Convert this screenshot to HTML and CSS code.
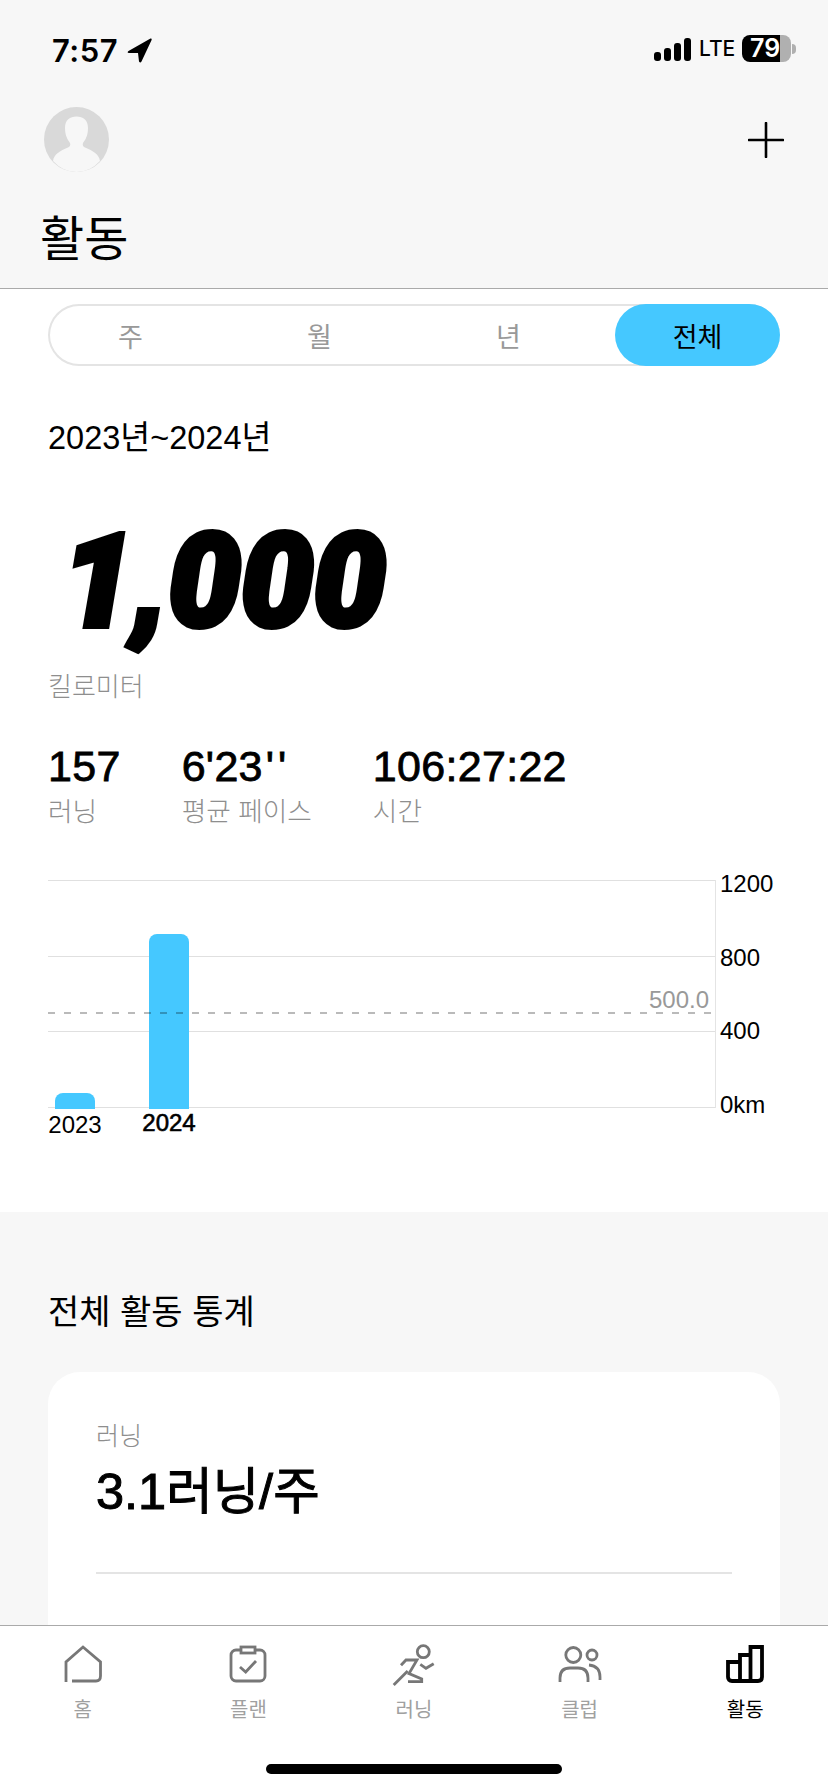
FILE: index.html
```html
<!DOCTYPE html>
<html lang="ko">
<head>
  <meta charset="UTF-8" />
  <meta name="viewport" content="width=device-width, initial-scale=1.0"/>
  <title>활동</title>
  <link rel="stylesheet" href="styles.css">
</head>
<body>
  <div class="app">
    <header class="top">
      <div class="status">
        <div class="status-left">
          <span class="clock">7:57</span>
          <svg class="arrow" width="25" height="25" viewBox="0 0 25 25"><path d="M23.5 .5 L1.5 13 Q-.5 14.8 2 15 L11 15 L12 23.5 Q13.3 25.5 14.5 23.5 L24.6 2 Q25 0 23.5 .5Z" fill="#000"/></svg>
        </div>
        <div class="status-right">
          <div class="signal"><i class="s1"></i><i class="s2"></i><i class="s3"></i><i class="s4"></i></div>
          <span class="lte">LTE</span>
          <div class="battery"><span>79</span></div>
          <div class="battery-cap"></div>
        </div>
      </div>

      <div class="toolbar">
        <svg class="avatar" width="65" height="65" viewBox="0 0 65 65">
          <circle cx="32.5" cy="32.5" r="32.5" fill="#d9d9d9"/>
          <path d="M9 54 C10 47 16 44 24 40.5 Q27 39 26 36 C22 31 21 26 21 21 C21 13 26 9.5 32.5 9.5 C39 9.5 44 13 44 21 C44 26 43 31 39 36 Q38 39 41 40.5 C49 44 55 47 56 54 Q46 65 32.5 65 Q19 65 9 54Z" fill="#f7f7f7"/>
        </svg>
        <svg class="plus" width="36" height="36" viewBox="0 0 36 36"><path d="M18 1 V35 M1 18 H35" stroke="#000" stroke-width="2.6" stroke-linecap="round"/></svg>
      </div>

      <h1 class="title">활동</h1>
    </header>

    <main class="content">
      <section class="summary">
        <div class="segment">
          <span class="seg-item">주</span>
          <span class="seg-item">월</span>
          <span class="seg-item">년</span>
          <span class="seg-item active">전체</span>
        </div>

        <p class="range">2023년~2024년</p>
        <div class="big-number">1,000</div>
        <p class="unit">킬로미터</p>

        <div class="stats">
          <div class="stat"><strong>157</strong><span>러닝</span></div>
          <div class="stat"><strong>6'23<b class="ticks">''</b></strong><span>평균 페이스</span></div>
          <div class="stat"><strong>106:27:22</strong><span>시간</span></div>
        </div>

        <div class="chart">
          <div class="plot">
            <div class="grid-lines"><i></i><i></i><i></i><i></i></div>
            <div class="bars">
              <div class="bar" style="height:16px"></div>
              <div class="bar" style="height:175px"></div>
            </div>
            <div class="goal"></div>
            <span class="goal-label">500.0</span>
          </div>
          <div class="axis">
            <span>1200</span><span>800</span><span>400</span><span>0km</span>
          </div>
        </div>
        <div class="years">
          <span>2023</span>
          <span class="current">2024</span>
        </div>
      </section>

      <section class="totals">
        <h2>전체 활동 통계</h2>
        <div class="card">
          <p class="card-label">러닝</p>
          <p class="card-value">3.1러닝/주</p>
          <div class="card-line"></div>
        </div>
      </section>
    </main>

    <nav class="tabs">
      <a class="tab">
        <svg width="38" height="38" viewBox="0 0 38 38"><path d="M2 37 V17 L19 2 L36.5 17 V31 Q36.5 36 32 36 H8"/></svg>
        <span>홈</span>
      </a>
      <a class="tab">
        <svg width="38" height="38" viewBox="0 0 38 38"><rect x="2" y="5" width="34" height="31" rx="5"/><rect x="12" y="2" width="14" height="6" fill="#fff"/><path d="M11 22 L16.7 27 L27 16"/></svg>
        <span>플랜</span>
      </a>
      <a class="tab">
        <svg class="runner" width="46" height="46" viewBox="0 0 46 46"><circle cx="32.3" cy="10.7" r="6"/><path d="M29.3 23.3 L35 27.3 L42.7 22.7"/><path d="M10 24.3 L15 19 H26 L18 32.5 L30.7 38 V40.7 H17"/><path d="M2.7 44 L16.7 30"/></svg>
        <span>러닝</span>
      </a>
      <a class="tab">
        <svg width="46" height="38" viewBox="0 0 46 38"><circle cx="16.3" cy="10" r="7.5"/><circle cx="35" cy="10" r="5"/><path d="M3 37 V33 Q3 23 13 23 H21 Q31 23 31 33 V37"/><path d="M32 20 Q43 21 43 32 V35"/></svg>
        <span>클럽</span>
      </a>
      <a class="tab active">
        <svg width="40" height="40" viewBox="0 0 40 40"><path d="M3 18 H15 V11 H25.5 V3 H37 V33 Q37 37 33 37 H7 Q3 37 3 33 Z M15 11 V37 M25.5 11 V37"/></svg>
        <span>활동</span>
      </a>
    </nav>
    <div class="home-area"><div class="home-bar"></div></div>
  </div>
</body>
</html>
```

FILE: styles.css
```css
* {
  box-sizing: border-box;
}

body {
  margin: 0;
  background: #fff;
  color: #000;
  font-family: 'Liberation Sans', 'Noto Sans CJK KR', sans-serif;
}

p, h1, h2 {
  margin: 0;
  font-weight: 400;
}

.app {
  width: 828px;
  height: 1792px;
  display: flex;
  flex-direction: column;
  overflow: hidden;
}

/* top area */
.top {
  background: #f7f7f7;
  height: 289px;
  border-bottom: 1px solid #aaa;
  flex: none;
}

.status {
  height: 100px;
  padding: 34px 32px 0 52px;
  display: flex;
  justify-content: space-between;
  align-items: flex-start;
}

.status-left {
  display: flex;
  align-items: center;
  gap: 9px;
  height: 32px;
}

.clock {
  font-family: Inter, sans-serif;
  font-weight: 600;
  font-size: 31px;
  letter-spacing: 0.5px;
}

.status-right {
  display: flex;
  align-items: center;
  height: 29px;
}

.signal {
  display: flex;
  align-items: flex-end;
  gap: 3px;
  height: 24px;
  margin-right: 8px;
}

.signal i {
  width: 7px;
  background: #000;
  border-radius: 3px;
}

.s1 { height: 9px; }
.s2 { height: 13px; }
.s3 { height: 18px; }
.s4 { height: 23px; }

.lte {
  font-family: Inter, sans-serif;
  font-weight: 500;
  font-size: 21px;
  width: 43px;
}

.battery {
  width: 49px;
  height: 27px;
  border-radius: 8px;
  background: linear-gradient(90deg, #000 77%, #b0b0b0 77%);
  color: #fff;
  font-family: Inter, sans-serif;
  font-weight: 600;
  font-size: 25px;
  line-height: 27px;
  padding-left: 8px;
}

.battery-cap {
  width: 4px;
  height: 10px;
  margin-left: 1px;
  background: #b0b0b0;
  border-radius: 0 4px 4px 0;
}

.toolbar {
  display: flex;
  justify-content: space-between;
  align-items: center;
  margin-top: 7px;
  padding: 0 44px;
}

.toolbar svg {
  display: block;
}

.title {
  font-family: 'Noto Sans CJK KR', sans-serif;
  font-size: 48px;
  line-height: 60px;
  margin: 33px 0 0 40px;
}

/* main */
.content {
  flex: 1;
  min-height: 0;
  overflow: hidden;
}

.summary {
  height: 923px;
  padding: 15px 48px 0;
}

.segment {
  display: flex;
  gap: 24px;
  height: 62px;
  border: 2px solid #e4e4e4;
  border-right: none;
  border-radius: 31px;
  width: 732px;
  font-family: 'Noto Sans CJK KR', sans-serif;
  font-size: 27px;
  color: #999;
}

.seg-item {
  flex: none;
  width: 165px;
  display: flex;
  align-items: center;
  justify-content: center;
  margin-top: -2px;
  margin-bottom: -2px;
}

.seg-item:first-child {
  margin-left: -2px;
}

.seg-item.active {
  background: #45c8ff;
  color: #000;
  border-radius: 31px;
}

.range {
  font-size: 32.5px;
  line-height: 40px;
  margin-top: 52px;
}

.big-number {
  margin-top: 59px;
  margin-left: 14px;
  font-family: Roboto, sans-serif;
  font-size: 129px;
  line-height: 129px;
  font-weight: 900;
  font-style: italic;
  letter-spacing: 0;
  -webkit-text-stroke: 6px #000;
}

.unit {
  font-size: 26px;
  line-height: 36px;
  font-weight: 300;
  color: #8e8e8e;
  margin-top: 23px;
}

.stats {
  display: flex;
  gap: 61px;
  margin-top: 36px;
}

.stat {
  display: flex;
  flex-direction: column;
}

.stat strong {
  font-size: 43px;
  line-height: 50px;
  font-weight: 400;
  letter-spacing: 0.3px;
  -webkit-text-stroke: 0.8px #000;
}

.ticks {
  font-weight: 400;
  letter-spacing: 4px;
  margin-left: 3px;
}

.stat span {
  font-size: 26.7px;
  line-height: 36px;
  font-weight: 300;
  color: #8e8e8e;
  margin-top: 3px;
}

.chart {
  display: flex;
  margin-top: 50px;
}

.plot {
  position: relative;
  width: 668px;
  height: 228px;
  border-right: 1px solid #e4e4e4;
}

.grid-lines {
  height: 100%;
  display: flex;
  flex-direction: column;
  justify-content: space-between;
}

.grid-lines i {
  display: block;
  height: 1px;
  background: #e0e0e0;
}

.bars {
  position: absolute;
  left: 7px;
  bottom: -1px;
  display: flex;
  align-items: flex-end;
  gap: 54px;
}

.bar {
  width: 40px;
  background: #45c8ff;
  border-radius: 8px 8px 0 0;
}

.goal {
  position: absolute;
  left: 0;
  right: 4px;
  top: 132px;
  height: 2px;
  background: repeating-linear-gradient(90deg, rgba(0, 0, 0, 0.27) 0 7px, transparent 7px 16px);
}

.goal-label {
  position: absolute;
  right: 6px;
  top: 106px;
  font-size: 24px;
  line-height: 28px;
  color: #999;
}

.axis {
  height: 251px;
  margin-top: -11px;
  margin-left: 4px;
  display: flex;
  flex-direction: column;
  justify-content: space-between;
  font-size: 24px;
  line-height: 30px;
}

.years {
  display: flex;
  gap: 54px;
  padding-left: 7px;
  margin-top: -10px;
  font-size: 24px;
  line-height: 30px;
}

.years span {
  width: 40px;
  display: flex;
  justify-content: center;
}

.years .current {
  -webkit-text-stroke: 0.6px #000;
  margin-top: -2px;
}

/* gray part */
.totals {
  background: #f7f7f7;
  padding: 76px 48px 0;
  height: 500px;
}

.totals h2 {
  font-family: 'Noto Sans CJK KR', sans-serif;
  font-size: 34px;
  line-height: 44px;
}

.card {
  margin-top: 40px;
  background: #fff;
  border-radius: 32px;
  padding: 46px 48px 0;
  height: 400px;
}

.card-label {
  font-size: 25px;
  line-height: 36px;
  font-weight: 300;
  color: #8e8e8e;
}

.card-value {
  font-size: 50.5px;
  line-height: 56px;
  margin-top: 10px;
  -webkit-text-stroke: 1px #000;
}

.card-line {
  height: 2px;
  background: #e4e4e4;
  margin-top: 52px;
}

/* bottom bar */
.tabs {
  flex: none;
  display: flex;
  height: 115px;
  background: #fff;
  border-top: 1px solid #aaa;
}

.tab {
  width: 20%;
  height: 100%;
  display: flex;
  flex-direction: column;
  align-items: center;
  padding-top: 19px;
  font-family: 'Noto Sans CJK KR', sans-serif;
  font-size: 20px;
  color: #a0a0a0;
}

.tab svg {
  display: block;
  height: 38px;
  fill: none;
  stroke: #777;
  stroke-width: 2.8;
  overflow: visible;
}

.tab .runner {
  height: 46px;
  margin: -4px 0;
}

.tab span {
  margin-top: 12px;
  line-height: 28px;
}

.tab.active {
  color: #000;
}

.tab.active svg {
  height: 40px;
  margin: -1px 0;
  stroke: #000;
  stroke-width: 3.8;
}

.home-area {
  flex: none;
  height: 52px;
  background: #fff;
  display: flex;
  justify-content: center;
  padding-top: 24px;
}

.home-bar {
  width: 296px;
  height: 10px;
  border-radius: 5px;
  background: #000;
}
```
